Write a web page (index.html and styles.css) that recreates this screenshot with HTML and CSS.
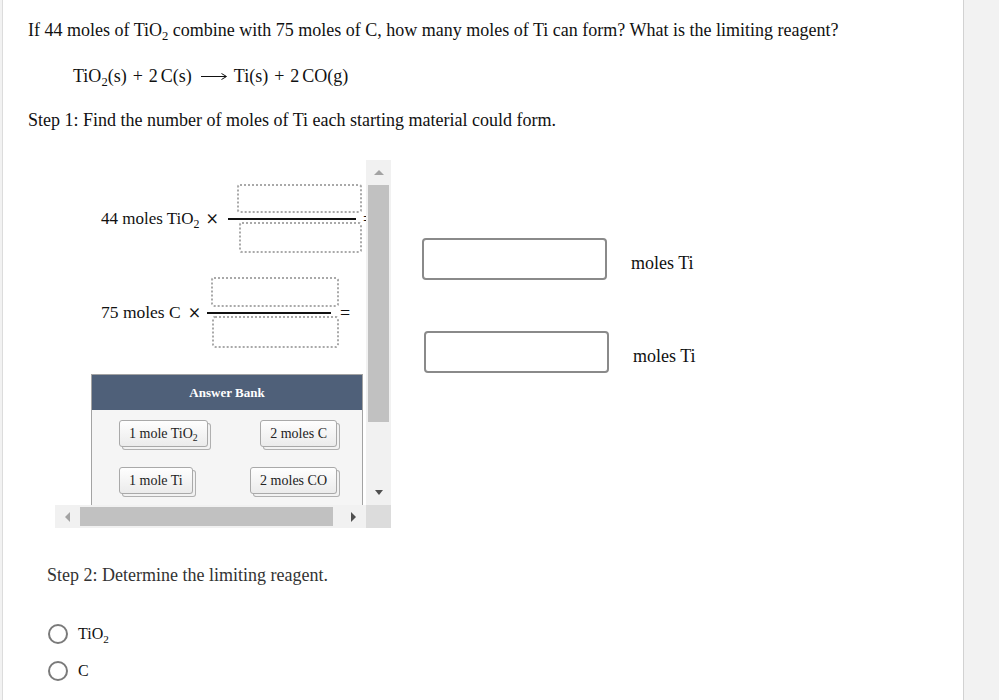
FILE: index.html
```html
<!DOCTYPE html>
<html lang="en">
<head>
<meta charset="utf-8">
<title>Limiting reagent</title>
<link rel="stylesheet" href="styles.css">
</head>
<body>
<div class="panel">
  <p class="question">If 44 moles of TiO<sub>2</sub> combine with 75 moles of C, how many moles of Ti can form? What is the limiting reagent?</p>
  <p class="equation">TiO<sub>2</sub>(s)<span class="op">+</span>2<span class="thin"></span>C(s)<svg class="yields" width="26" height="10" viewBox="0 0 26 10"><path d="M0 5.5H25M20.5 2.5L25.5 5.5L20.5 8.5" fill="none" stroke="#111" stroke-width="1"/></svg>Ti(s)<span class="op">+</span>2<span class="thin"></span>CO(g)</p>
  <p class="step">Step 1: Find the number of moles of Ti each starting material could form.</p>

  <div class="workspace">
    <div class="scroller">
      <div class="viewport">
        <div class="inner">
          <div class="calc-row">
            <span class="given given--a">44 moles TiO<sub>2</sub><span class="times">×</span></span>
            <div class="fraction fraction--a">
              <div class="slot slot--num"></div>
              <div class="bar"></div>
              <div class="slot slot--den"></div>
            </div>
            <span class="equals">=</span>
          </div>
          <div class="calc-row calc-row--second">
            <span class="given given--b">75 moles C<span class="times times--b">×</span></span>
            <div class="fraction fraction--b">
              <div class="slot slot--num"></div>
              <div class="bar"></div>
              <div class="slot slot--den"></div>
            </div>
            <span class="equals">=</span>
          </div>
          <div class="bank">
            <div class="bank-head">Answer Bank</div>
            <div class="bank-body">
              <span class="chip chip--left">1 mole TiO<sub>2</sub></span>
              <span class="chip chip--right">2 moles C</span>
              <span class="chip chip--left">1 mole Ti</span>
              <span class="chip chip--right">2 moles CO</span>
            </div>
          </div>
        </div>
      </div>
      <div class="vbar">
        <div class="sb-btn"><span class="tri tri--up"></span></div>
        <div class="vthumb"></div>
        <div class="sb-fill"></div>
        <div class="sb-btn"><span class="tri tri--down"></span></div>
      </div>
      <div class="hbar">
        <div class="sb-btn sb-btn--h"><span class="tri tri--left"></span></div>
        <div class="hthumb"></div>
        <div class="sb-fill"></div>
        <div class="sb-btn sb-btn--h"><span class="tri tri--right"></span></div>
      </div>
      <div class="corner"></div>
    </div>

    <div class="answers">
      <div class="answer-row">
        <div class="answer-input"></div>
        <span class="unit">moles Ti</span>
      </div>
      <div class="answer-row answer-row--second">
        <div class="answer-input"></div>
        <span class="unit">moles Ti</span>
      </div>
    </div>
  </div>

  <div class="step2">
    <p class="step step--two">Step 2: Determine the limiting reagent.</p>
    <div class="choices">
      <div class="choice"><span class="radio"></span><span class="choice-label">TiO<sub>2</sub></span></div>
      <div class="choice"><span class="radio"></span><span class="choice-label">C</span></div>
    </div>
  </div>
</div>
</body>
</html>
```

FILE: styles.css
```css
html, body {
  margin: 0;
  padding: 0;
}
body {
  background: #f2f2f2;
  font-family: "Liberation Serif", "Times New Roman", serif;
  color: #111;
}
.panel {
  margin-left: 2px;
  width: 935px;
  min-height: 700px;
  padding: 19px 0 0 25px;
  box-sizing: content-box;
  background: #fff;
  border-left: 1px solid #dcdcdc;
  border-right: 1px solid #d2d2d2;
}
p { margin: 0; }
sub {
  font-size: 70%;
  vertical-align: -0.32em;
  line-height: 0;
}
.question {
  font-size: 18px;
  line-height: 22px;
}
.equation {
  margin-top: 24px;
  padding-left: 45px;
  font-size: 18px;
  line-height: 22px;
  white-space: nowrap;
}
.op {
  margin: 0 6px;
}
.thin {
  display: inline-block;
  width: 3px;
}
.yields {
  vertical-align: middle;
  margin: -3px 7px 0 9px;
}
.step {
  margin-top: 22px;
  font-size: 18px;
  line-height: 22px;
}

.workspace {
  display: flex;
  align-items: flex-start;
  margin-top: 29px;
}
.scroller {
  margin-left: 27px;
  display: grid;
  grid-template-columns: 311px 25px;
  grid-template-rows: 345px 23px;
}
.viewport {
  overflow: hidden;
  background: #fff;
}
.inner {
  width: 420px;
  padding: 24px 0 0 46px;
}
.calc-row {
  display: flex;
  align-items: center;
  font-size: 17px;
  line-height: 22px;
}
.calc-row--second {
  margin-top: 24px;
  font-size: 17.5px;
}
.given {
  flex: none;
  white-space: nowrap;
}
.given--a { width: 127px; }
.given--b { width: 106px; }
.times {
  font-family: "DejaVu Serif", serif;
  font-size: 16px;
  margin-left: 6px;
}
.times--b {
  margin-left: 7px;
}
.fraction {
  flex: none;
  display: flex;
  flex-direction: column;
}
.fraction--a { width: 134px; }
.fraction--b { width: 132px; }
.slot {
  box-sizing: border-box;
  border: 2px dotted #a9a9a9;
  border-radius: 3px;
  align-self: flex-end;
}
.fraction--a .slot--num { width: 125px; height: 29px; }
.fraction--a .slot--den { width: 123px; height: 31px; }
.fraction--b .slot--num { width: 128px; height: 30px; }
.fraction--b .slot--den { width: 127px; height: 32px; }
.slot--num { margin-bottom: 5px; }
.slot--den { margin-top: 2px; }
.bar {
  height: 2px;
  background: #111;
}
.fraction--a .bar { width: 128px; }
.fraction--b .bar { width: 124px; }
.equals {
  margin-left: 1px;
  font-size: 18px;
}

.bank {
  margin-top: 26px;
  margin-left: -10px;
  width: 272px;
  box-sizing: border-box;
  border: 1px solid #a3a3a3;
  background: #f5f5f5;
}
.bank-head {
  height: 35px;
  line-height: 35px;
  background: #4f6079;
  color: #fff;
  font-weight: bold;
  font-size: 13px;
  text-align: center;
}
.bank-body {
  display: grid;
  grid-template-columns: 1fr 1fr;
  row-gap: 20px;
  padding: 10px 25px 30px 27px;
}
.chip {
  height: 27px;
  box-sizing: border-box;
  padding: 0 9px;
  display: inline-block;
  line-height: 25px;
  font-size: 14px;
  color: #222;
  border: 1px solid #a9a9a9;
  border-radius: 3px;
  background: linear-gradient(#fefefe, #ebebeb);
  box-shadow: 3px 3px 0 -1px #f2f2f2, 3px 3px 0 0 #b0b0b0;
  white-space: nowrap;
}
.chip--left { justify-self: start; }
.chip--right { justify-self: end; }

.vbar, .hbar {
  background: #f1f1f1;
  display: flex;
}
.vbar { flex-direction: column; }
.sb-btn {
  flex: none;
  height: 25px;
  display: flex;
  align-items: center;
  justify-content: center;
}
.sb-btn--h {
  height: auto;
  width: 25px;
}
.sb-fill { flex: 1; }
.vthumb {
  flex: none;
  height: 237px;
  margin: 0 2px;
  background: #c1c1c1;
}
.hthumb {
  flex: none;
  width: 253px;
  margin: 2px 0;
  background: #c1c1c1;
}
.corner {
  background: #dcdcdc;
}
.tri {
  width: 0;
  height: 0;
}
.tri--up {
  border-left: 5px solid transparent;
  border-right: 5px solid transparent;
  border-bottom: 5px solid #a3a3a3;
}
.tri--down {
  border-left: 4.5px solid transparent;
  border-right: 4.5px solid transparent;
  border-top: 5px solid #505050;
}
.tri--left {
  border-top: 5px solid transparent;
  border-bottom: 5px solid transparent;
  border-right: 5px solid #a3a3a3;
}
.tri--right {
  border-top: 5px solid transparent;
  border-bottom: 5px solid transparent;
  border-left: 5px solid #505050;
}

.answers {
  margin-left: 31px;
  padding-top: 78px;
}
.answer-row {
  display: flex;
  align-items: center;
}
.answer-row--second {
  margin-top: 51px;
  margin-left: 2px;
}
.answer-input {
  width: 185px;
  height: 42px;
  box-sizing: border-box;
  border: 2px solid #8a8a8a;
  border-radius: 4px;
  background: #fff;
}
.unit {
  margin-left: 24px;
  margin-top: 8px;
  font-size: 18px;
  line-height: 22px;
}

.step2 {
  margin-top: 36px;
  padding-left: 19px;
}
.step--two {
  margin-top: 0;
  color: #333;
}
.choices {
  margin-top: 36px;
  display: flex;
  flex-direction: column;
  gap: 13px;
}
.choice {
  height: 24px;
  display: flex;
  align-items: center;
}
.radio {
  width: 20px;
  height: 20px;
  box-sizing: border-box;
  border: 2px solid #7a7a7a;
  border-radius: 50%;
  margin-left: 1px;
  margin-right: 10px;
}
.choice-label {
  font-size: 16px;
  line-height: 20px;
}
```
